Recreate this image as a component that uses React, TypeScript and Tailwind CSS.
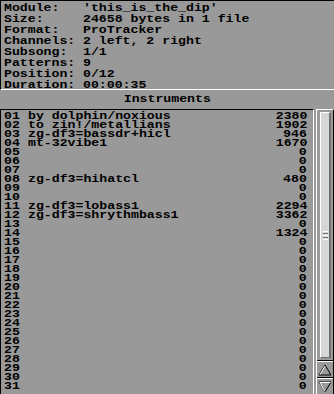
const info: [string, string][] = [
  ["Module:", "'this_is_the_dip'"],
  ["Size:", "24658 bytes in 1 file"],
  ["Format:", "ProTracker"],
  ["Channels:", "2 left, 2 right"],
  ["Subsong:", "1/1"],
  ["Patterns:", "9"],
  ["Position:", "0/12"],
  ["Duration:", "00:00:35"],
];

const named: Record<number, [string, number]> = {
  1: ["by dolphin/noxious", 2380],
  2: ["to zin!/metallians", 1902],
  3: ["zg-df3=bassdr+hicl", 946],
  4: ["mt-32vibe1", 1670],
  8: ["zg-df3=hihatcl", 480],
  11: ["zg-df3=lobass1", 2294],
  12: ["zg-df3=shrythmbass1", 3362],
  14: ["", 1324],
};

const rows = Array.from({ length: 31 }, (_, i) => {
  const n = i + 1;
  const [name, size] = named[n] ?? ["", 0];
  return { idx: String(n).padStart(2, "0"), name, size };
});

function Arrow({ up }: { up: boolean }) {
  return (
    <svg width="14" height="12" viewBox="0 0 14 12">
      {up ? (
        <>
          <polygon points="7,1 13,11 1,11" fill="none" stroke="#000" strokeWidth="1" />
          <polyline points="7,2 2,10.5" fill="none" stroke="#fff" strokeWidth="1" />
        </>
      ) : (
        <>
          <polygon points="1,1 13,1 7,11" fill="none" stroke="#000" strokeWidth="1" />
          <polyline points="1.5,1.5 12.5,1.5" fill="none" stroke="#fff" strokeWidth="1" />
          <polyline points="2,2 7,10.5" fill="none" stroke="#fff" strokeWidth="1" />
        </>
      )}
    </svg>
  );
}

// the bitmap font is wider than any installed mono, so stretch each run
const wide = "inline-block scale-x-[1.2] origin-left";
const wideR = "inline-block scale-x-[1.2] origin-right";

export default function App() {
  return (
    <div className="w-[334px] h-[394px] bg-[#999999] overflow-hidden flex flex-col font-['Liberation_Mono',monospace] font-bold text-[11px] text-black">
      {/* module info */}
      <div className="h-[90px] shrink-0 overflow-hidden border-t border-l border-black border-b border-b-white pl-[3px] pt-[2px]">
        {info.map(([label, value]) => (
          <div key={label} className="flex h-[11px] leading-[11px] whitespace-pre">
            <span className="w-[79px] shrink-0">
              <span className={wide}>{label}</span>
            </span>
            <span className={wide}>{value}</span>
          </div>
        ))}
      </div>

      <div className="h-[19px] shrink-0 flex items-center justify-center leading-none">
        <span className="inline-block scale-x-[1.2]">Instruments</span>
      </div>

      <div className="flex flex-1 min-h-0">
        {/* instrument list */}
        <div className="flex-1 border-t border-l border-black border-r border-r-white pl-[3px] pr-[6px] pt-[2px] overflow-hidden">
          {rows.map((r) => (
            <div key={r.idx} className="flex h-[9px] leading-[9px] whitespace-pre">
              <span className="w-[24px] shrink-0">
                <span className={wide}>{r.idx}</span>
              </span>
              <span className="flex-1">
                <span className={wide}>{r.name}</span>
              </span>
              <span className={wideR}>{r.size}</span>
            </div>
          ))}
        </div>

        <div className="w-[2px] shrink-0" />

        {/* scrollbar */}
        <div className="w-[18px] shrink-0 flex flex-col border-t border-l border-white border-r border-r-black">
          <div className="flex-1 flex pl-[3px] py-[2px]">
            <div className="w-[11px] bg-[#d6d6d6] border-l border-t border-white border-r-2 border-r-[#707070] border-b border-b-[#707070] flex flex-col items-center justify-center">
              <div className="flex flex-col gap-[1px]">
                <div className="w-[5px] h-[1px] bg-white" />
                <div className="w-[5px] h-[1px] bg-[#7a7a7a]" />
                <div className="w-[5px] h-[1px] bg-white" />
                <div className="w-[5px] h-[1px] bg-[#7a7a7a]" />
                <div className="w-[5px] h-[1px] bg-white" />
              </div>
            </div>
          </div>
          <div className="h-[17px] shrink-0 border-t border-black">
            <div className="h-full border-t border-white flex items-center justify-center">
              <Arrow up />
            </div>
          </div>
          <div className="h-[17px] shrink-0 border-t border-black">
            <div className="h-full border-t border-white flex items-center justify-center">
              <Arrow up={false} />
            </div>
          </div>
        </div>
      </div>
    </div>
  );
}
